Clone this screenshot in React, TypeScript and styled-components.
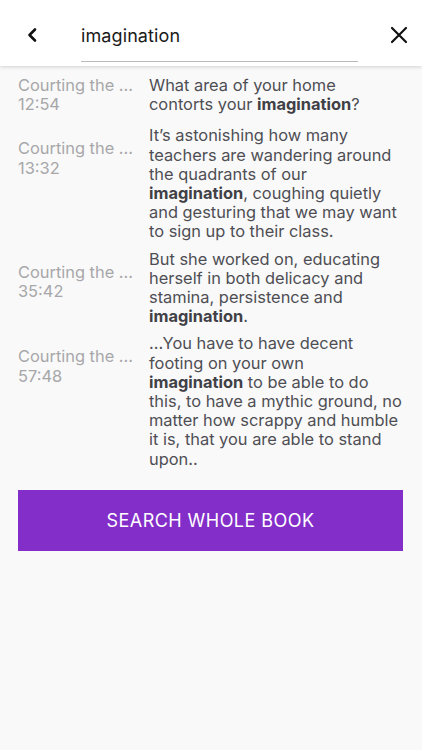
import React from "react";
import styled, { createGlobalStyle } from "styled-components";

const GlobalStyle = createGlobalStyle`
  html, body {
    margin: 0;
    padding: 0;
    background: #f9f9f9;
  }
  body {
    font-family: Inter, "Noto Sans", "Liberation Sans", sans-serif;
    -webkit-font-smoothing: antialiased;
  }
  * { box-sizing: border-box; }
`;

const Page = styled.div`
  min-height: 750px;
  background: #f9f9f9;
  display: flex;
  flex-direction: column;
`;

const Header = styled.header`
  height: 66px;
  background: #ffffff;
  box-shadow: 0 1px 4px rgba(0, 0, 0, 0.16);
  display: flex;
  align-items: flex-start;
  position: relative;
  z-index: 1;
`;

const IconButton = styled.button`
  width: 24px;
  height: 24px;
  margin-top: 23px;
  padding: 0;
  border: none;
  background: transparent;
  display: flex;
  align-items: center;
  justify-content: center;
  color: #111;
  flex-shrink: 0;
`;

const BackButton = styled(IconButton)`
  margin-left: 20px;
`;

const CloseButton = styled(IconButton)`
  margin-left: auto;
  margin-right: 11px;
`;

const SearchField = styled.div`
  margin-left: 37px;
  width: 277px;
  height: 62px;
  padding-top: 9px;
  border-bottom: 1.5px solid #b9b9b9;
  display: flex;
  align-items: center;
  font-size: 18px;
  color: #1a1a1a;
  letter-spacing: 0.1px;
`;

const List = styled.div`
  padding: 10px 17px 0 18px;
  display: flex;
  flex-direction: column;
`;

const Row = styled.div<{ $extra?: number }>`
  display: flex;
  padding-bottom: ${(p) => 8 + (p.$extra ?? 0)}px;
  font-size: 16.4px;
  line-height: 19.2px;
`;

const Meta = styled.div<{ $lead: number }>`
  width: 131px;
  flex-shrink: 0;
  padding-top: ${(p) => p.$lead}px;
  color: #a7a7a9;
`;

const Chapter = styled.div`
  white-space: nowrap;
`;

const Snippet = styled.div`
  flex: 1;
  color: #4e4e54;
`;

const Line = styled.span`
  display: block;
  white-space: nowrap;
`;

const Hit = styled.b`
  font-weight: 700;
  color: #404046;
`;

const SearchButton = styled.button`
  margin: 13px 19px 0 18px;
  height: 61px;
  border: none;
  background: #832ec9;
  color: #ffffff;
  font-family: inherit;
  font-size: 18px;
  letter-spacing: 0.45px;
  text-transform: uppercase;
  display: flex;
  align-items: center;
  justify-content: center;
`;

type Result = {
  time: string;
  lead: number;
  extra?: number;
  lines: string[];
};

const TERM = "imagination";

const results: Result[] = [
  {
    time: "12:54",
    lead: 0,
    extra: 4,
    lines: ["What area of your home", "contorts your *?"],
  },
  {
    time: "13:32",
    lead: 13,
    lines: [
      "It\u2019s astonishing how many",
      "teachers are wandering around",
      "the quadrants of our",
      "*, coughing quietly",
      "and gesturing that we may want",
      "to sign up to their class.",
    ],
  },
  {
    time: "35:42",
    lead: 13,
    lines: [
      "But she worked on, educating",
      "herself in both delicacy and",
      "stamina, persistence and",
      "*.",
    ],
  },
  {
    time: "57:48",
    lead: 13,
    lines: [
      "...You have to have decent",
      "footing on your own",
      "* to be able to do",
      "this, to have a mythic ground, no",
      "matter how scrappy and humble",
      "it is, that you are able to stand",
      "upon..",
    ],
  },
];

function renderLine(text: string) {
  const parts = text.split("*");
  return parts.map((part, i) => (
    <React.Fragment key={i}>
      {i > 0 && <Hit>{TERM}</Hit>}
      {part}
    </React.Fragment>
  ));
}

export default function App() {
  return (
    <Page>
      <GlobalStyle />
      <Header>
        <BackButton aria-label="Back">
          <svg width="24" height="24" viewBox="0 0 24 24" fill="none">
            <path d="M15 6.5 L9.5 12 L15 17.5" stroke="#111" strokeWidth="2.6" strokeLinecap="round" strokeLinejoin="round" />
          </svg>
        </BackButton>
        <SearchField>imagination</SearchField>
        <CloseButton aria-label="Clear">
          <svg width="24" height="24" viewBox="0 0 24 24" fill="none">
            <path d="M5 5 L19 19 M19 5 L5 19" stroke="#111" strokeWidth="2.2" strokeLinecap="round" />
          </svg>
        </CloseButton>
      </Header>
      <List>
        {results.map((r) => (
          <Row key={r.time} $extra={r.extra}>
            <Meta $lead={r.lead}>
              <Chapter>Courting the ...</Chapter>
              <div>{r.time}</div>
            </Meta>
            <Snippet>
              {r.lines.map((l, i) => (
                <Line key={i}>{renderLine(l)}</Line>
              ))}
            </Snippet>
          </Row>
        ))}
      </List>
      <SearchButton>Search whole book</SearchButton>
    </Page>
  );
}
